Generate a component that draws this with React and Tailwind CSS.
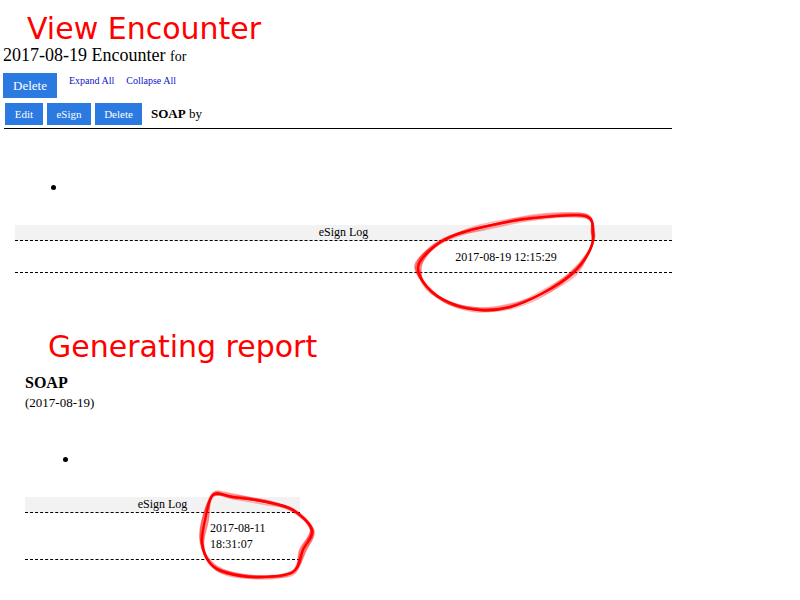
import React from 'react';

// hand-drawn red circles around the eSign dates
const RING_TOP = [
  [585, 216], [533, 218], [483, 227], [450, 237], [430, 250], [418, 267], [427, 287],
  [450, 303], [480, 310], [510, 307], [543, 293], [573, 273], [590, 250], [593, 233],
];
const RING_BOTTOM = [
  [213, 495], [233, 497], [267, 502], [293, 510], [312, 530], [303, 550], [293, 572],
  [260, 577], [227, 573], [210, 563], [202, 543], [205, 520],
];
const JITTER = [[0, 0], [2, -1], [-2, 1], [3, 0], [-3, 1], [1, 3], [0, -3], [-2, -2], [3, 2], [-3, -2], [1, -2], [-1, 2]];

function smoothPath(points) {
  const n = points.length;
  let d = `M ${points[0][0]} ${points[0][1]}`;
  for (let i = 0; i < n; i++) {
    const p0 = points[(i - 1 + n) % n];
    const p1 = points[i];
    const p2 = points[(i + 1) % n];
    const p3 = points[(i + 2) % n];
    const c1 = [p1[0] + (p2[0] - p0[0]) / 6, p1[1] + (p2[1] - p0[1]) / 6];
    const c2 = [p2[0] - (p3[0] - p1[0]) / 6, p2[1] - (p3[1] - p1[1]) / 6];
    d += ` C ${c1[0]} ${c1[1]} ${c2[0]} ${c2[1]} ${p2[0]} ${p2[1]}`;
  }
  return d;
}

function Ring({ points }) {
  return (
    <g fill="none" stroke="#ff0000" strokeLinejoin="round">
      {JITTER.map(([dx, dy], i) => {
        const pts = points.map(([x, y], k) => [x + dx * ((k % 3) / 2), y + dy * (((k + i) % 4) / 3)]);
        return <path key={i} d={smoothPath(pts)} strokeWidth={1.4} strokeOpacity={0.3} />;
      })}
      <path d={smoothPath(points)} strokeWidth={2.4} />
    </g>
  );
}

function Dot({ className }) {
  return <div className={`w-[5px] h-[5px] rounded-full bg-black ${className}`} />;
}

export default function App() {
  return (
    <div className="relative w-[800px] h-[600px] overflow-hidden bg-white text-black font-['Liberation_Serif',serif]">
      <section>
        <h2 className="pl-[27px] pt-[13px] text-[30px] leading-[32px] text-[#ff0000] font-['DejaVu_Sans',sans-serif]">View Encounter</h2>
        <h1 className="h-[20px] pl-[3px] text-[18px] leading-[20px]">
          2017-08-19 Encounter <span className="text-[14px] leading-none">for</span>
        </h1>

        <div className="mt-[8px] ml-[3px] flex items-start">
          <button className="w-[54px] h-[25px] bg-[#2a7ae2] text-white text-[13px]">Delete</button>
          <a className="ml-[12px] mt-[2px] text-[10px] leading-[12px] text-[#1010cc]">Expand All</a>
          <a className="ml-[12px] mt-[2px] text-[10px] leading-[12px] text-[#1010cc]">Collapse All</a>
        </div>

        <div className="h-[22px] mt-[5px] ml-[5px] flex items-center gap-[4px]">
          <button className="w-[38px] h-[22px] bg-[#2a7ae2] text-white text-[11px]">Edit</button>
          <button className="w-[44px] h-[22px] bg-[#2a7ae2] text-white text-[11px]">eSign</button>
          <button className="w-[47px] h-[22px] bg-[#2a7ae2] text-white text-[11px]">Delete</button>
          <span className="ml-[5px] text-[13px] leading-[16px]"><b>SOAP</b> by</span>
        </div>

        <div className="mt-[3px] ml-[4px] w-[668px] border-t border-black" />

        <Dot className="mt-[56px] ml-[51px]" />

        <div className="mt-[35px] ml-[15px] w-[657px] text-[12px]">
          <div className="h-[16px] bg-[#f2f2f2] text-center leading-[15px] border-b border-dashed border-black">eSign Log</div>
          <div className="h-[32px] grid grid-cols-[400px_182px_1fr] items-center border-b border-dashed border-black">
            <div />
            <div className="text-center">2017-08-19 12:15:29</div>
            <div />
          </div>
        </div>
      </section>

      <section>
        <h2 className="mt-[58px] pl-[48px] text-[30px] leading-[32px] text-[#ff0000] font-['DejaVu_Sans',sans-serif]">Generating report</h2>
        <h3 className="mt-[11px] pl-[25px] text-[16px] leading-[18px] font-bold">SOAP</h3>
        <div className="mt-[3px] pl-[25px] text-[13px] leading-[16px]">(2017-08-19)</div>

        <Dot className="mt-[46px] ml-[63px]" />

        <div className="mt-[35px] ml-[25px] w-[275px] text-[12px]">
          <div className="h-[16px] bg-[#f2f2f2] text-center leading-[15px] border-b border-dashed border-black">eSign Log</div>
          <div className="h-[47px] grid grid-cols-[183px_92px] items-center border-b border-dashed border-black">
            <div />
            <div className="pl-[2px] leading-[16px]">2017-08-11 18:31:07</div>
          </div>
        </div>
      </section>

      <svg className="absolute left-0 top-0 pointer-events-none" width="800" height="600" viewBox="0 0 800 600">
        <Ring points={RING_TOP} />
        <Ring points={RING_BOTTOM} />
      </svg>
    </div>
  );
}
